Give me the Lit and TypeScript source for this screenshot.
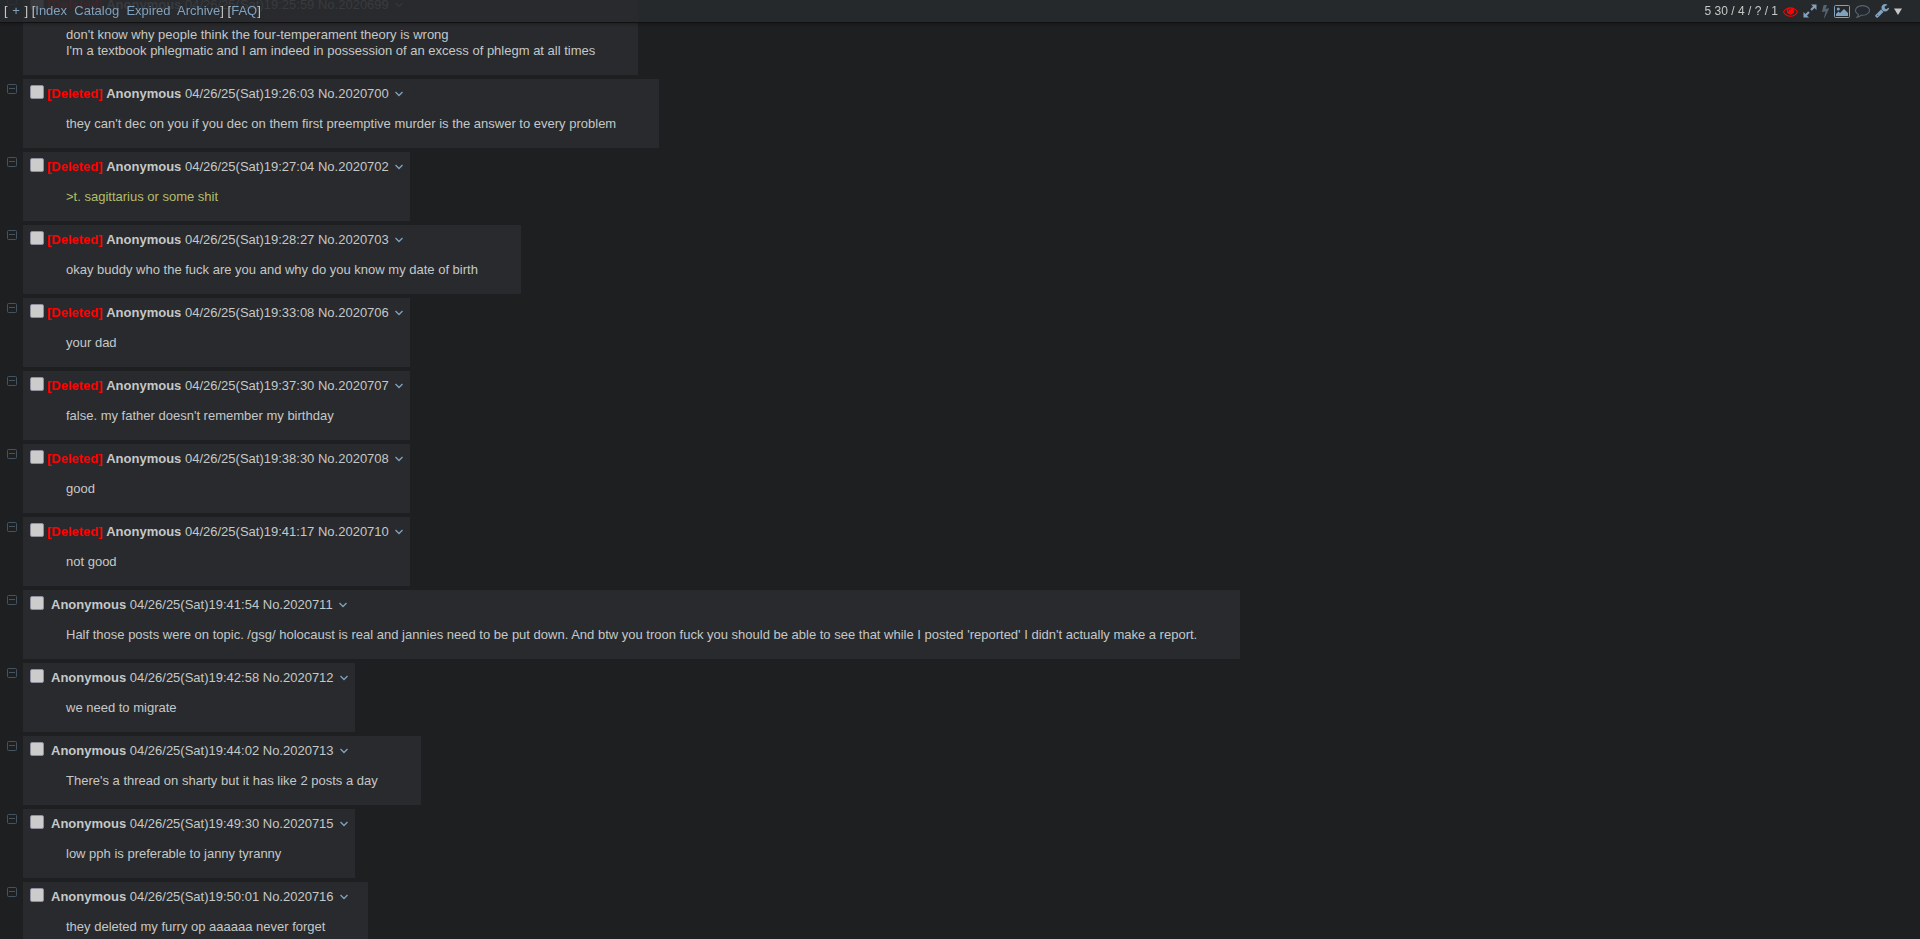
import { LitElement, html, css, svg, nothing } from "lit";
import { customElement } from "lit/decorators.js";

interface Post {
  no: string;
  time: string;
  deleted?: boolean;
  quote?: boolean;
  lines: string[];
}

const posts: Post[] = [
  { no: "2020699", time: "19:25:59", deleted: true, lines: ["don't know why people think the four-temperament theory is wrong", "I'm a textbook phlegmatic and I am indeed in possession of an excess of phlegm at all times"] },
  { no: "2020700", time: "19:26:03", deleted: true, lines: ["they can't dec on you if you dec on them first preemptive murder is the answer to every problem"] },
  { no: "2020702", time: "19:27:04", deleted: true, quote: true, lines: [">t. sagittarius or some shit"] },
  { no: "2020703", time: "19:28:27", deleted: true, lines: ["okay buddy who the fuck are you and why do you know my date of birth"] },
  { no: "2020706", time: "19:33:08", deleted: true, lines: ["your dad"] },
  { no: "2020707", time: "19:37:30", deleted: true, lines: ["false. my father doesn't remember my birthday"] },
  { no: "2020708", time: "19:38:30", deleted: true, lines: ["good"] },
  { no: "2020710", time: "19:41:17", deleted: true, lines: ["not good"] },
  { no: "2020711", time: "19:41:54", lines: ["Half those posts were on topic. /gsg/ holocaust is real and jannies need to be put down. And btw you troon fuck you should be able to see that while I posted 'reported' I didn't actually make a report."] },
  { no: "2020712", time: "19:42:58", lines: ["we need to migrate"] },
  { no: "2020713", time: "19:44:02", lines: ["There's a thread on sharty but it has like 2 posts a day"] },
  { no: "2020715", time: "19:49:30", lines: ["low pph is preferable to janny tyranny"] },
  { no: "2020716", time: "19:50:01", lines: ["they deleted my furry op aaaaaa never forget"] },
];

interface Tool {
  label: string;
  cls: string;
  width: number;
  height: number;
  box: string;
  body: unknown;
}

const tools: Tool[] = [
  {
    label: "Thread watcher", cls: "red", width: 15, height: 13, box: "0 128 1792 1536",
    body: svg`<path d="M1664 960q-152-236-381-353 61 104 61 225 0 185-131.500 316.500t-316.500 131.500-316.500-131.500-131.500-316.500q0-121 61-225-229 117-381 353 133 205 333.500 326.500t434.500 121.500 434.500-121.500 333.500-326.500zm-720-384q0-20-14-34t-34-14q-125 0-214.500 89.500t-89.500 214.500q0 20 14 34t34 14 34-14 14-34q0-86 61-147t147-61q20 0 34-14t14-34zm848 384q0 34-20 69-140 230-376.500 368.500t-499.500 138.500-499.500-139-376.500-368q-20-35-20-69t20-69q140-229 376.500-368t499.500-139 499.500 139 376.500 368q20 35 20 69z"/>`,
  },
  {
    label: "Expand images", cls: "", width: 14, height: 14, box: "0 0 14 14",
    body: svg`<path d="M8 .5h5.500V6l-2-2-2.700 2.700-1.500-1.500L10 2.500zM6 13.500H.500V8l2 2 2.700-2.700 1.500 1.500L4 11.500z"/>`,
  },
  {
    label: "Live updates", cls: "dim", width: 7, height: 14, box: "448 0 896 1792",
    body: svg`<path d="M1333 566q18 20 7 44l-540 1157q-13 25-42 25-4 0-14-2-17-5-25.500-19t-4.500-30l197-808-406 101q-4 1-12 1-18 0-31-11-18-15-13-39l201-825q4-14 16-23t28-9h328q19 0 32 12.500t13 29.500q0 8-5 18l-171 463 396-98q8-2 12-2 19 0 34 15z"/>`,
  },
  {
    label: "Gallery", cls: "", width: 16, height: 13, box: "0 0 16 13",
    body: svg`<rect x=".5" y=".5" width="15" height="12" rx="1" fill="none" stroke="currentColor"/><circle cx="4.300" cy="4" r="1.500"/><path d="M2 11V9l2.500-2.500L6 8l4-4 4 4v3z"/>`,
  },
  {
    label: "Quick reply", cls: "dim", width: 15, height: 14, box: "0 128 1792 1672",
    body: svg`<path d="M896 384q-204 0-381.500 69.500t-282 187.500-104.500 255q0 112 71.500 213.500t201.500 175.500l87 50-27 96q-24 91-70 172 152-63 275-171l43-38 57 6q69 8 130 8 204 0 381.500-69.500t282-187.500 104.500-255-104.500-255-282-187.500-381.500-69.500zm896 512q0 174-120 321.500t-326 233-450 85.500q-70 0-145-8-198 175-460 242-49 14-114 22h-5q-15 0-27-10.500t-16-27.500v-1q-3-4-.5-12t2-10 4.500-9.500l6-9 7-8.500 8-9q7-8 31-34.500t34.500-38 31-39.500 32.500-51 27-59 26-76q-157-89-247.500-220t-90.500-281q0-174 120-321.500t326-233 450-85.500 450 85.500 326 233 120 321.500z"/>`,
  },
  {
    label: "Settings", cls: "", width: 14, height: 14, box: "64 128 1664 1664",
    body: svg`<path d="M448 1472q0-26-19-45t-45-19-45 19-19 45 19 45 45 19 45-19 19-45zm644-420l-682 682q-37 37-90 37-52 0-91-37l-106-108q-38-36-38-90 0-53 38-91l681-681q39 98 114.500 173.500t173.500 114.500zm634-435q0 39-23 106-47 134-164.500 217.500t-258.500 83.500q-185 0-316.500-131.500t-131.500-316.500 131.500-316.500 316.500-131.500q58 0 121.500 16.500t107.500 46.500q16 11 16 28t-16 28l-293 169v224l193 107q5-3 79-48.500t135.500-81 70.500-35.500q15 0 23.500 10t8.500 25z"/>`,
  },
  {
    label: "Board menu", cls: "light", width: 8, height: 7, box: "0 0 8 7",
    body: svg`<path d="M0 .5h8L4 7z"/>`,
  },
];

@customElement("app-root")
export class AppRoot extends LitElement {
  static styles = css`
    :host {
      display: block;
      height: 100vh;
      overflow: hidden;
      background: #1d1f21;
      color: #c5c8c6;
      font-family: "Liberation Sans", Arial, sans-serif;
      font-size: 13px;
      line-height: 16px;
    }
    a { color: #81a2be; text-decoration: none; }
    .bar {
      position: fixed;
      inset: 0 0 auto 0;
      z-index: 1;
      display: flex;
      justify-content: space-between;
      align-items: center;
      height: 22px;
      padding: 0 18px 0 4px;
      background: rgba(40, 42, 46, 0.9);
      border-bottom: 1px solid #111;
      box-shadow: 0 1px 3px rgba(0, 0, 0, 0.3);
    }
    .boards { white-space: pre; }
    .plus { padding: 0 1px; }
    .tools { display: flex; align-items: center; gap: 5px; }
    .stats { font-size: 12px; }
    .tools .tool { display: flex; }
    .tools .dim { opacity: 0.5; }
    .tools .red { color: #f00; }
    .tools .light { color: #c5c8c6; }
    .thread {
      display: flex;
      flex-direction: column;
      align-items: flex-start;
      gap: 4px;
      margin-top: -10px;
    }
    .row { display: flex; align-items: flex-start; }
    .hide {
      display: flex;
      width: 23px;
      padding: 5px 6px 0 7px;
      box-sizing: border-box;
      border: 0;
      background: none;
      color: #81a2be;
      opacity: 0.4;
    }
    .post { padding: 6px 7px 0; background: #282a2e; }
    .head { display: flex; align-items: center; height: 18px; white-space: pre; }
    .check {
      appearance: none;
      box-sizing: border-box;
      width: 14px;
      height: 14px;
      margin: 0 3px 4px 0;
      border: 1px solid #8f8f9d;
      border-radius: 2px;
      background: #ccc;
    }
    .plain { margin-right: 7px; }
    .deleted { color: #f00; font-weight: bold; }
    .menu { display: flex; margin-left: 6px; }
    .text { margin: 13px 36px 16px; }
    .quote { color: #b5bd68; }
  `;

  private post(p: Post) {
    return html`
      <article class="row">
        <button class="hide" aria-label="Hide post">
          <svg width="10" height="10" viewBox="0 0 10 10" fill="none" stroke="currentColor"><rect x=".5" y=".5" width="9" height="9" rx="1" /><path d="M2 4.500h6" /></svg>
        </button>
        <div class="post">
          <div class="head"><input class="check ${p.deleted ? "" : "plain"}" type="checkbox" aria-label="Select post ${p.no}" />${p.deleted ? html`<span class="deleted">[Deleted] </span>` : nothing}<b>Anonymous</b><span> 04/26/25(Sat)${p.time} No.${p.no}</span><a class="menu" href="#" aria-label="Post menu"><svg width="8" height="6" viewBox="0 0 8 6" fill="none" stroke="currentColor" stroke-width="1.300"><path d="M.5 1L4 4.500 7.500 1" /></svg></a></div>
          <blockquote class="text">${p.lines.map((l) => html`<div class=${p.quote ? "quote" : ""}>${l}</div>`)}</blockquote>
        </div>
      </article>`;
  }

  render() {
    return html`
      <nav class="bar">
        <div class="boards">[ <a class="plus" href="#">+</a> ] [<a href="#">Index</a>  <a href="#">Catalog</a>  <a href="#">Expired</a>  <a href="#">Archive</a>] [<a href="#">FAQ</a>]</div>
        <div class="tools">
          <span class="stats">5 30 / 4 / ? / 1</span>
          ${tools.map((t) => html`
            <a class="tool ${t.cls}" href="#" aria-label=${t.label}>
              <svg width=${t.width} height=${t.height} viewBox=${t.box} fill="currentColor" aria-hidden="true">${t.body}</svg>
            </a>`)}
        </div>
      </nav>
      <main class="thread">${posts.map((p) => this.post(p))}</main>`;
  }
}
